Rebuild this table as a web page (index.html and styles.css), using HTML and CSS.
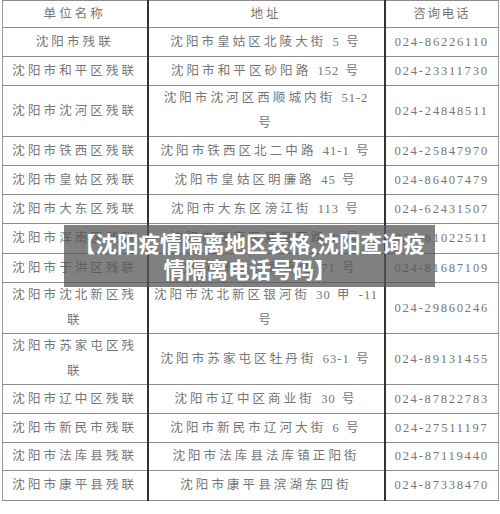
FILE: index.html
```html
<!DOCTYPE html>
<html lang="zh-CN">
<head>
<meta charset="utf-8">
<title>沈阳疫情隔离地区表格</title>
<link rel="stylesheet" href="styles.css">
</head>
<body>
<div class="page">
  <table class="grid">
    <colgroup><col class="c1"><col class="c2"><col class="c3"></colgroup>
    <tr class="hd"><td>单位名称</td><td>地址</td><td class="ph">咨询电话</td></tr>
    <tr><td>沈阳市残联</td><td>沈阳市皇姑区北陵大街 <span class="n">5</span> 号</td><td class="ph">024-86226110</td></tr>
    <tr><td>沈阳市和平区残联</td><td>沈阳市和平区砂阳路 <span class="n">152</span> 号</td><td class="ph">024-23311730</td></tr>
    <tr class="tall"><td>沈阳市沈河区残联</td><td>沈阳市沈河区西顺城内街 <span class="n">51-2</span><br>号</td><td class="ph">024-24848511</td></tr>
    <tr><td>沈阳市铁西区残联</td><td>沈阳市铁西区北二中路 <span class="n">41-1</span> 号</td><td class="ph">024-25847970</td></tr>
    <tr><td>沈阳市皇姑区残联</td><td>沈阳市皇姑区明廉路 <span class="n">45</span> 号</td><td class="ph">024-86407479</td></tr>
    <tr><td>沈阳市大东区残联</td><td>沈阳市大东区滂江街 <span class="n">113</span> 号</td><td class="ph">024-62431507</td></tr>
    <tr class="r30"><td>沈阳市浑南区残联</td><td>沈阳市浑南区营盘西路 <span class="n">9</span> 号</td><td class="ph">024-81022511</td></tr>
    <tr><td>沈阳市于洪区残联</td><td>沈阳市于洪区黄海路 <span class="n">71</span> 号</td><td class="ph">024-81687109</td></tr>
    <tr class="tall"><td>沈阳市沈北新区残<br>联</td><td>沈阳市沈北新区银河街 <span class="n">30</span> 甲 <span class="n">-11</span><br>号</td><td class="ph">024-29860246</td></tr>
    <tr class="tall"><td>沈阳市苏家屯区残<br>联</td><td>沈阳市苏家屯区牡丹街 <span class="n">63-1</span> 号</td><td class="ph">024-89131455</td></tr>
    <tr><td>沈阳市辽中区残联</td><td>沈阳市辽中区商业街 <span class="n">30</span> 号</td><td class="ph">024-87822783</td></tr>
    <tr><td>沈阳市新民市残联</td><td>沈阳市新民市辽河大街 <span class="n">6</span> 号</td><td class="ph">024-27511197</td></tr>
    <tr class="r28"><td>沈阳市法库县残联</td><td>沈阳市法库县法库镇正阳街</td><td class="ph">024-87119440</td></tr>
    <tr class="r30"><td>沈阳市康平县残联</td><td>沈阳市康平县滨湖东四街</td><td class="ph">024-87338470</td></tr>
  </table>
  <div class="banner">【沈阳疫情隔离地区表格,沈阳查询疫<br>情隔离电话号码】</div>
</div>
</body>
</html>
```
FILE: styles.css
```css
html, body {
  margin: 0;
  padding: 0;
  background: #ffffff;
}
.page {
  position: relative;
  width: 500px;
  height: 514px;
  overflow: hidden;
}
.grid {
  margin-left: 2px;
  width: 496px;
  border-collapse: collapse;
  table-layout: fixed;
  font-family: "Liberation Serif", "Noto Sans CJK SC", serif;
  font-size: 12.5px;
  color: #767676;
  border: 1px solid #9a9a9a;
}
.c1 { width: 145px; }
.c2 { width: 237px; }
.c3 { width: 114px; }
.grid td {
  padding: 0;
  text-align: center;
  vertical-align: middle;
  letter-spacing: 3.1px;
  line-height: 25px;
  border-top: 1px solid #8c8c8c;
  border-bottom: 1px solid #8c8c8c;
  white-space: nowrap;
}
.grid td + td {
  border-left: 2px solid #333333;
}
.grid tr { height: 29px; }
.grid tr.hd { height: 27px; }
.grid tr.tall { height: 51px; }
.grid tr.r30 { height: 30px; }
.grid tr.r28 { height: 28px; }
.grid td.ph {
  letter-spacing: 1.8px;
}
.grid .n {
  letter-spacing: 1px;
}
.banner {
  position: absolute;
  left: 64px;
  top: 225px;
  width: 371px;
  height: 62px;
  box-sizing: border-box;
  padding-top: 5px;
  background: rgba(85, 85, 85, 0.75);
  color: #ffffff;
  font-family: "Noto Sans CJK SC", sans-serif;
  font-weight: 700;
  font-size: 21.5px;
  line-height: 26px;
  text-align: center;
  letter-spacing: 0;
}
```
